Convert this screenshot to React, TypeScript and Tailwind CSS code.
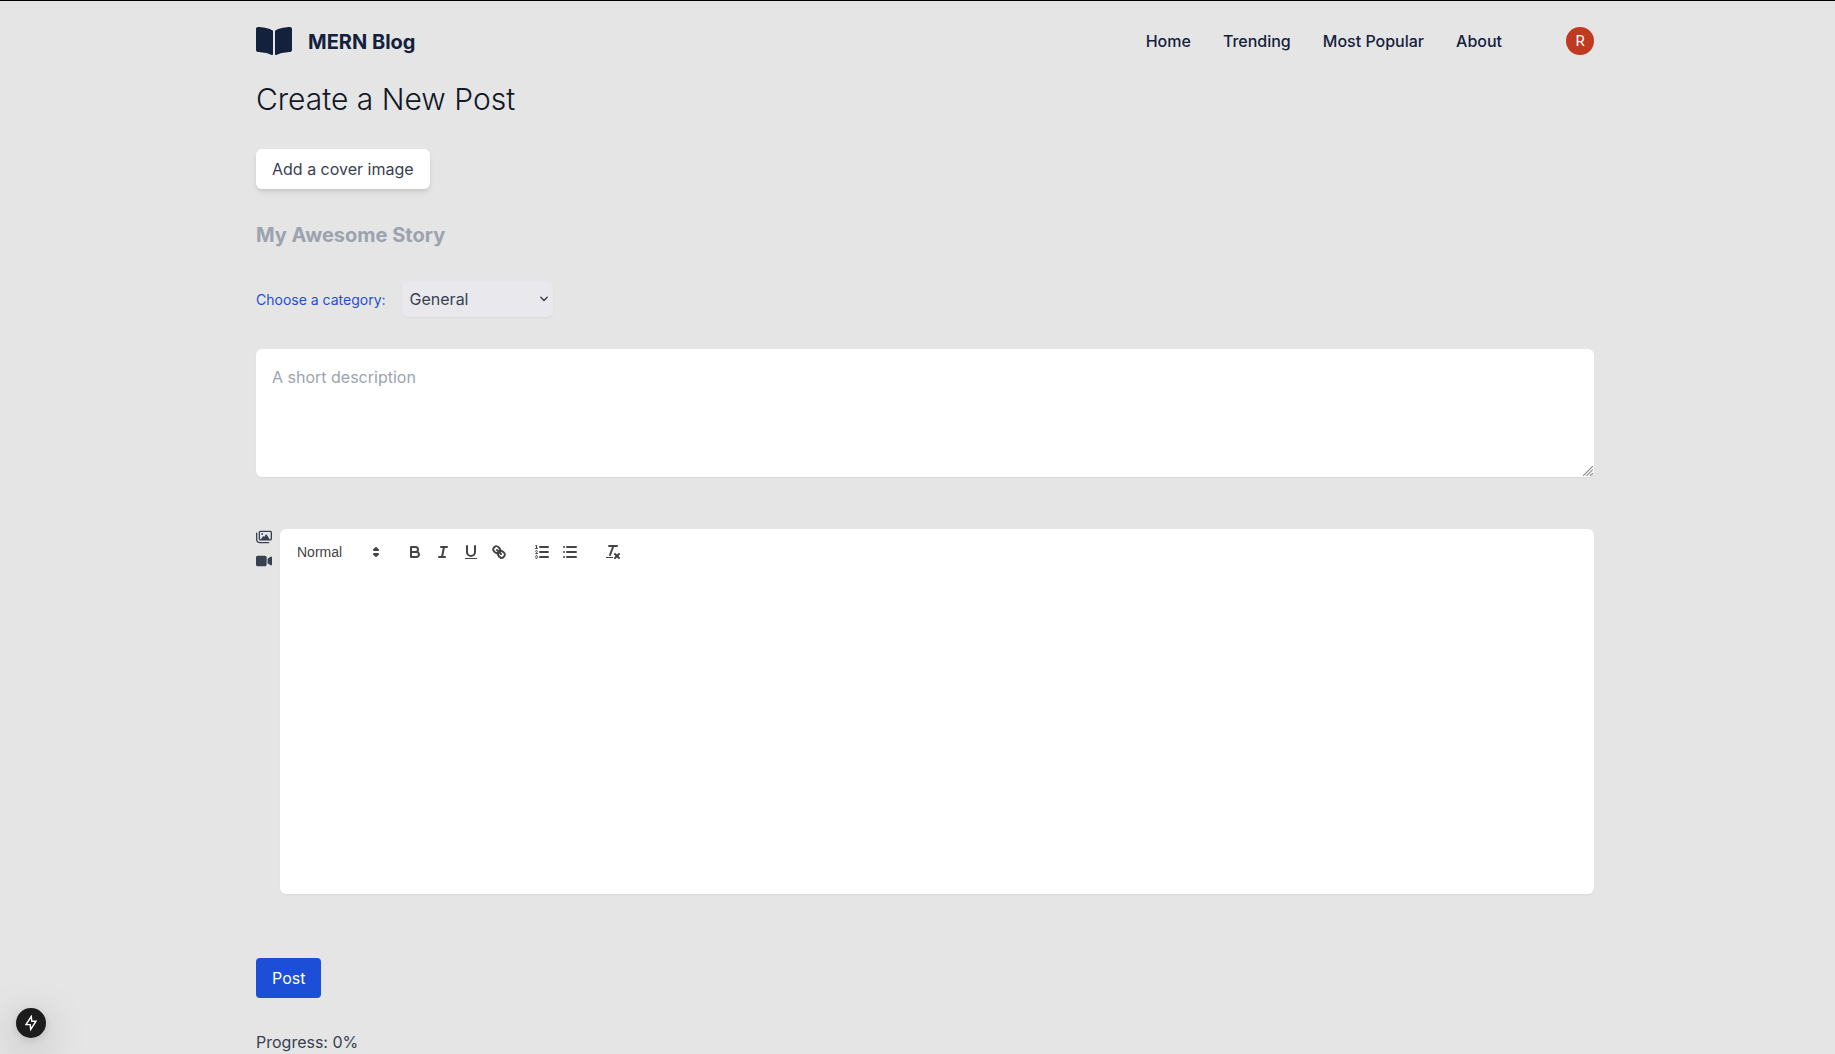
import React from "react";
import { FaBookOpen } from "react-icons/fa";
import { FaRegImages, FaVideo } from "react-icons/fa6";

const navLinks = ["Home", "Trending", "Most Popular", "About"];

function ToolIcon({ children }: { children: React.ReactNode }) {
  return (
    <button className="h-6 w-7 px-[5px] py-[3px] text-[#444]">
      <svg viewBox="0 0 18 18" className="h-[18px] w-[18px]" fill="none" stroke="currentColor" strokeWidth="2" strokeLinecap="round" strokeLinejoin="round">
        {children}
      </svg>
    </button>
  );
}

function Toolbar() {
  return (
    <div className="flex gap-[15px] px-2 pt-[11px]">
      <div className="flex h-6 w-[98px] items-center justify-between pl-[9px] pr-px font-['Liberation_Sans',sans-serif] text-sm font-medium text-[#444]">
        <span>Normal</span>
        <svg viewBox="0 0 18 18" className="h-[18px] w-[18px]" fill="none" stroke="currentColor" strokeWidth="2" strokeLinecap="round" strokeLinejoin="round">
          <polygon points="7 11 9 13 11 11 7 11" />
          <polygon points="7 7 9 5 11 7 7 7" />
        </svg>
      </div>
      <div className="flex">
        <ToolIcon>
          <path d="M5,4H9.5A2.5,2.5,0,0,1,12,6.5v0A2.5,2.5,0,0,1,9.5,9H5A0,0,0,0,1,5,9V4A0,0,0,0,1,5,4Z" />
          <path d="M5,9h5.5A2.5,2.5,0,0,1,13,11.5v0A2.5,2.5,0,0,1,10.5,14H5a0,0,0,0,1,0,0V9A0,0,0,0,1,5,9Z" />
        </ToolIcon>
        <ToolIcon>
          <line x1="7" x2="13" y1="4" y2="4" />
          <line x1="5" x2="11" y1="14" y2="14" />
          <line x1="8" x2="10" y1="14" y2="4" />
        </ToolIcon>
        <ToolIcon>
          <path d="M5,3V9a4.012,4.012,0,0,0,4,4H9a4.012,4.012,0,0,0,4-4V3" />
          <rect x="3" y="15" width="12" height="1" fill="currentColor" stroke="none" />
        </ToolIcon>
        <ToolIcon>
          <line x1="7" x2="11" y1="7" y2="11" />
          <path d="M8.9,4.577a3.476,3.476,0,0,1,.36,4.679A3.476,3.476,0,0,1,4.577,8.9C3.185,7.5,2.035,6.4,4.217,4.217S7.5,3.185,8.9,4.577Z" />
          <path d="M13.423,9.1a3.476,3.476,0,0,0-4.679-.36,3.476,3.476,0,0,0,.36,4.679c1.392,1.392,2.5,2.542,4.679.36S14.815,10.5,13.423,9.1Z" />
        </ToolIcon>
      </div>
      <div className="flex">
        <ToolIcon>
          <line x1="7" x2="15" y1="4" y2="4" />
          <line x1="7" x2="15" y1="9" y2="9" />
          <line x1="7" x2="15" y1="14" y2="14" />
          <line x1="2.5" x2="4.5" y1="5.5" y2="5.5" strokeWidth="1" />
          <path fill="currentColor" stroke="none" d="M3.5,6A0.5,0.5,0,0,1,3,5.5V3.085l-0.276.138A0.5,0.5,0,0,1,2.053,3c-0.124-.247-0.023-0.324.224-0.447l1-.5A0.5,0.5,0,0,1,4,2.5v3A0.5,0.5,0,0,1,3.5,6Z" />
          <path strokeWidth="1" d="M4.5,10.5h-2c0-.234,1.85-1.076,1.85-2.234A0.959,0.959,0,0,0,2.5,8.156" />
          <path strokeWidth="1" d="M2.5,14.846a0.959,0.959,0,0,0,1.85-.109A0.7,0.7,0,0,0,3.75,14a0.688,0.688,0,0,0,.6-0.736,0.959,0.959,0,0,0-1.85-.109" />
        </ToolIcon>
        <ToolIcon>
          <line x1="6" x2="15" y1="4" y2="4" />
          <line x1="6" x2="15" y1="9" y2="9" />
          <line x1="6" x2="15" y1="14" y2="14" />
          <line x1="3" x2="3" y1="4" y2="4" />
          <line x1="3" x2="3" y1="9" y2="9" />
          <line x1="3" x2="3" y1="14" y2="14" />
        </ToolIcon>
      </div>
      <ToolIcon>
        <line x1="5" x2="13" y1="3" y2="3" />
        <line x1="6" x2="9.35" y1="12" y2="3" />
        <line x1="11" x2="15" y1="11" y2="15" />
        <line x1="15" x2="11" y1="11" y2="15" />
        <rect x="2" y="14" width="7" height="1" fill="currentColor" stroke="none" />
      </ToolIcon>
    </div>
  );
}

export default function App() {
  return (
    <div className="h-[1054px] overflow-hidden border-t border-black bg-[#e5e5e5] pl-64 font-[Inter,sans-serif] text-base text-[#374151]">
      <div className="flex w-[1338px] flex-col items-start">
        <header className="flex h-20 w-full items-center justify-between text-[#14213d]">
          <div className="flex items-center gap-4">
            <FaBookOpen className="h-8 w-9" />
            <span className="pt-px text-xl font-bold">MERN Blog</span>
          </div>
          <div className="flex items-center gap-16">
            <nav className="flex gap-8 font-medium">
              {navLinks.map((l) => (
                <a key={l}>{l}</a>
              ))}
            </nav>
            <div className="flex h-7 w-7 items-center justify-center rounded-full bg-[#bf3a20] font-[Roboto,sans-serif] text-[15px] text-white">R</div>
          </div>
        </header>

        <h1 className="text-3xl font-light text-[#111827]">Create a New Post</h1>

        <button className="mt-8 h-10 rounded-md bg-white px-4 shadow-md">Add a cover image</button>

        <div className="mt-8 text-xl font-bold text-[#9ca3af]">My Awesome Story</div>

        <div className="mt-8 flex h-9 items-center gap-4">
          <span className="pt-0.5 text-sm text-[#1d4ed8]">Choose a category:</span>
          <div className="flex h-9 w-[151px] items-center justify-between rounded-md bg-[#e9e9ed] pl-2 pr-[5px] shadow-[0_1px_2px_rgba(0,0,0,0.05)]">
            <span>General</span>
            <svg viewBox="0 0 8 6" className="h-1.5 w-2" fill="none" stroke="currentColor" strokeWidth="1.4" strokeLinecap="round" strokeLinejoin="round">
              <path d="M0.8 1.2 4 4.5 7.2 1.2" />
            </svg>
          </div>
        </div>

        <div className="mt-8 flex h-32 w-full items-end justify-between rounded-md bg-white shadow-[0_1px_2px_rgba(0,0,0,0.05)]">
          <span className="self-start p-4 text-[#9ca3af]">A short description</span>
          <svg viewBox="0 0 10 10" className="mb-px mr-px h-2.5 w-2.5" stroke="#777" strokeWidth="1.3" strokeDasharray="1 0.42" fill="none">
            <path d="M0 10 10 0M3.5 10 10 3.5M7 10 10 7" />
          </svg>
        </div>

        <div className="mt-[52px] flex w-full gap-2">
          <div className="flex flex-col gap-2">
            <FaRegImages className="h-4 w-4" />
            <FaVideo className="h-4 w-4" />
          </div>
          <div className="h-[365px] flex-1 rounded-md bg-white shadow-[0_1px_2px_rgba(0,0,0,0.05)]">
            <Toolbar />
          </div>
        </div>

        <button className="mt-16 h-10 rounded bg-[#1d4ed8] px-4 text-white">Post</button>
        <p className="mt-8">Progress: 0%</p>
      </div>

      <div className="fixed bottom-4 left-4 flex h-[30px] w-[30px] items-center justify-center rounded-full bg-[#1c1c1c] text-white shadow-[0_11px_40px_rgba(0,0,0,0.25),0_2px_10px_rgba(0,0,0,0.12)]">
        <svg viewBox="0 0 12 16" className="h-4 w-3" fill="none" stroke="currentColor" strokeWidth="1.4">
          <path d="M6.3 1.5 1 9.6H5.2L5.7 14.5 11 6.2H6.8Z" />
        </svg>
      </div>
    </div>
  );
}
